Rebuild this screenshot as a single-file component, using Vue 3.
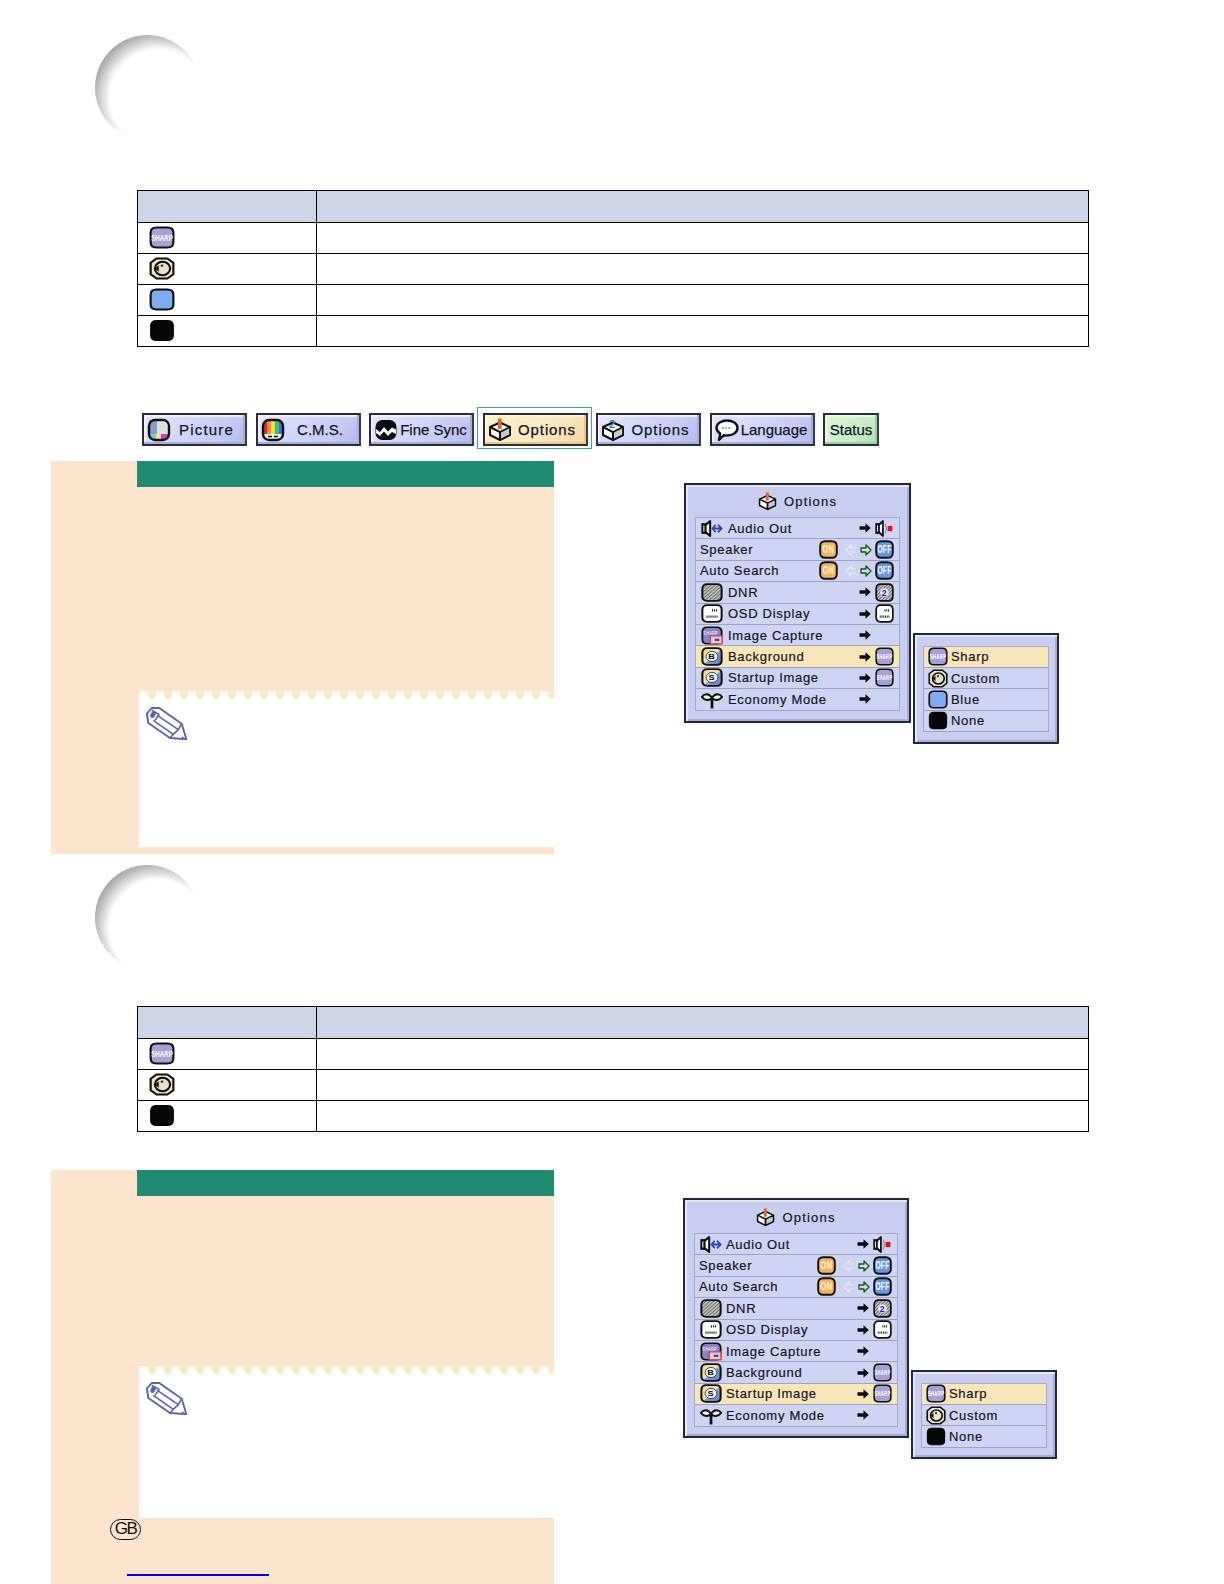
<script setup>
import { h } from 'vue'

const viewBoxes = {
  'i-audio': '0 0 24 18',
  'i-mute': '0 0 24 18',
  'i-eco': '0 0 24 18',
  'i-arrow': '0 0 12 10',
  'i-arrow-green': '0 0 12 12',
  'i-arrow-faded': '0 0 12 12',
  'i-pencil': '0 0 41 33'
}

const captions = {
  'i-sharp': { text: 'SHARP', x: 12, y: 15.5, size: 9.5, fill: '#fff', weight: 700, len: 20 },
  'i-capture': { text: 'SHARP', x: 10.5, y: 11, size: 6.5, fill: '#fff', len: 16 },
  'i-on': { text: 'ON', x: 12, y: 16.5, size: 13, fill: '#fff3d8', weight: 700, len: 15 },
  'i-off': { text: 'OFF', x: 12, y: 16.5, size: 13, fill: '#fff', weight: 700, len: 18 },
  'i-box2': { text: '2', x: 11, y: 9.5, size: 11, fill: '#3f6fd8', weight: 700 },
  'i-dnr2': { text: '2', x: 12, y: 16, size: 11, fill: '#1420d0', weight: 700 },
  'i-b': { text: 'B', x: 12, y: 15.5, size: 10, fill: '#111', weight: 700 },
  'i-s': { text: 'S', x: 12, y: 15.5, size: 10, fill: '#111', weight: 700 }
}

const Icon = (props) => {
  const box = viewBoxes[props.name] || '0 0 24 24'
  const [, , w, ht] = box.split(' ')
  const cap = captions[props.name]
  const kids = [h('use', { href: '#' + props.name, width: w, height: ht })]
  if (cap) {
    const attrs = {
      x: cap.x,
      y: cap.y,
      'text-anchor': 'middle',
      'font-family': 'Liberation Sans',
      'font-size': cap.size,
      'font-weight': cap.weight || 400,
      fill: cap.fill
    }
    if (cap.len) {
      attrs.textLength = cap.len
      attrs.lengthAdjust = 'spacingAndGlyphs'
    }
    kids.push(h('text', attrs, cap.text))
  }
  return h('svg', { viewBox: box, preserveAspectRatio: 'none' }, kids)
}
Icon.props = ['name']

const tabs = [
  { label: 'Picture', icon: 'i-picture', kind: 'loose' },
  { label: 'C.M.S.', icon: 'i-cms', kind: 'tight' },
  { label: 'Fine Sync', icon: 'i-sync', kind: 'tight' },
  { label: 'Options', icon: 'i-box1', kind: 'wide selected' },
  { label: 'Options', icon: 'i-box2', kind: 'wide' },
  { label: 'Language', icon: 'i-bubble', kind: 'tight' },
  { label: 'Status', icon: '', kind: 'tight status' }
]

const baseRows = [
  { label: 'Audio Out', icon: 'i-audio', value: 'i-mute' },
  { label: 'Speaker', toggle: true },
  { label: 'Auto Search', toggle: true },
  { label: 'DNR', icon: 'i-dnr', value: 'i-dnr2' },
  { label: 'OSD Display', icon: 'i-osd', value: 'i-osd' },
  { label: 'Image Capture', icon: 'i-capture' },
  { label: 'Background', icon: 'i-b', value: 'i-sharp' },
  { label: 'Startup Image', icon: 'i-s', value: 'i-sharp' },
  { label: 'Economy Mode', icon: 'i-eco' }
]

const sharp = { label: 'Sharp', icon: 'i-sharp' }
const custom = { label: 'Custom', icon: 'i-custom' }
const blue = { label: 'Blue', icon: 'i-blue' }
const none = { label: 'None', icon: 'i-none' }

const blocks = [
  { id: 'one', options: [sharp, custom, blue, none], active: 'Background', showTabs: true },
  { id: 'two', options: [sharp, custom, none], active: 'Startup Image', showTabs: false }
]

const scallops = Array.from({ length: 26 }, (_, i) => i)
</script>

<template>
  <div class="page">
    <svg class="sprite" width="0" height="0" aria-hidden="true">
      <defs>
        <linearGradient id="g-half" x1="0" y1="0" x2="1" y2="1">
          <stop offset="0" stop-color="#f4d28a" />
          <stop offset="0.5" stop-color="#f2e0b0" />
          <stop offset="0.55" stop-color="#7f9ad8" />
          <stop offset="1" stop-color="#5f7ed0" />
        </linearGradient>
        <pattern id="p-hatch" width="3" height="3" patternUnits="userSpaceOnUse" patternTransform="rotate(45)">
          <rect width="3" height="3" fill="#c8c8c8" />
          <rect width="1.3" height="3" fill="#6e6e6e" />
        </pattern>
      </defs>
      <symbol id="i-sharp" viewBox="0 0 24 24">
        <path d="M7 1.5H17Q22.5 1.5 22.5 7V17Q22.5 22.5 17 22.5H7Q1.5 22.5 1.5 17V7Q1.5 1.5 7 1.5Z" fill="#a79fd8" stroke="#111" stroke-width="2" />
      </symbol>
      <symbol id="i-custom" viewBox="0 0 24 24">
        <path d="M7 1.5H17L22.5 6V18L17 22.5H7L1.5 18V6Z" fill="#e9e5c6" stroke="#111" stroke-width="2" stroke-linejoin="round" />
        <circle cx="12.5" cy="12" r="7" fill="#eadfcb" stroke="#111" stroke-width="2" />
        <path d="M5.5 12L9 8.5V15.5Z" fill="#111" />
        <circle cx="12" cy="9" r="1.3" fill="#333" />
      </symbol>
      <symbol id="i-blue" viewBox="0 0 24 24">
        <path d="M7 1.5H17Q22.5 1.5 22.5 7V17Q22.5 22.5 17 22.5H7Q1.5 22.5 1.5 17V7Q1.5 1.5 7 1.5Z" fill="#7fabef" stroke="#111" stroke-width="2" />
      </symbol>
      <symbol id="i-none" viewBox="0 0 24 24">
        <path d="M7 1H17Q23 1 23 7V17Q23 23 17 23H7Q1 23 1 17V7Q1 1 7 1Z" fill="#070707" />
      </symbol>
      <symbol id="i-picture" viewBox="0 0 24 24">
        <rect x="2" y="2" width="20" height="20" rx="6" fill="#d8d8d8" />
        <rect x="2" y="2" width="8" height="15" fill="#8a9cc8" />
        <rect x="10" y="2" width="12" height="15" fill="#e0e0e0" />
        <rect x="3" y="16" width="6" height="5" fill="#62d8d8" />
        <rect x="9" y="16" width="5" height="5" fill="#f2ee70" />
        <rect x="14" y="16" width="7" height="5" fill="#d838c8" />
        <rect x="2" y="2" width="20" height="20" rx="6" fill="none" stroke="#111" stroke-width="2.4" />
      </symbol>
      <symbol id="i-cms" viewBox="0 0 24 24">
        <rect x="2" y="2" width="20" height="20" rx="6" fill="#eee" />
        <rect x="3" y="3" width="3.6" height="13" fill="#e82828" />
        <rect x="6.6" y="3" width="3.6" height="13" fill="#f09030" />
        <rect x="10.2" y="3" width="3.6" height="13" fill="#e8e840" />
        <rect x="13.8" y="3" width="3.6" height="13" fill="#40c850" />
        <rect x="17.4" y="3" width="3.6" height="13" fill="#4070e8" />
        <path d="M7 18.5H11M13 18.5H17" stroke="#111" stroke-width="1.6" />
        <rect x="2" y="2" width="20" height="20" rx="6" fill="none" stroke="#111" stroke-width="2.4" />
      </symbol>
      <symbol id="i-sync" viewBox="0 0 24 24">
        <rect x="1.5" y="2" width="21" height="20" rx="7" fill="#0b0b0b" />
        <path d="M2 11L6 14L10 9L14 13.5L18 9.5L22 11.5V16L18 14L14 18L10 13.5L6 18L2 15Z" fill="#fff" />
      </symbol>
      <symbol id="i-box1" viewBox="0 0 24 24">
        <path d="M2 9L12 4.5L22 9V17L12 22L2 17Z" fill="#fff" stroke="#111" stroke-width="2" stroke-linejoin="round" />
        <path d="M12 14L22 9V17L12 22Z" fill="#c8c8c8" stroke="#111" stroke-width="1.6" stroke-linejoin="round" />
        <path d="M2 9L12 14V22" fill="none" stroke="#111" stroke-width="2" />
        <rect x="10" y="0.5" width="3.6" height="10.5" fill="#e0682c" />
      </symbol>
      <symbol id="i-box2" viewBox="0 0 24 24">
        <path d="M2 9L12 4.5L22 9V17L12 22L2 17Z" fill="#fff" stroke="#111" stroke-width="2" stroke-linejoin="round" />
        <path d="M12 14L22 9V17L12 22Z" fill="#c8c8c8" stroke="#111" stroke-width="1.6" stroke-linejoin="round" />
        <path d="M2 9L12 14V22" fill="none" stroke="#111" stroke-width="2" />
      </symbol>
      <symbol id="i-bubble" viewBox="0 0 24 24">
        <path d="M12 2.5C18 2.5 22.5 5.7 22.5 10S18 17.5 12 17.5C11 17.5 10 17.4 9 17.2L4 22L5.2 15.6C3 14.2 1.5 12.2 1.5 10C1.5 5.7 6 2.5 12 2.5Z" fill="#fff" stroke="#111" stroke-width="2.4" stroke-linejoin="round" />
        <path d="M7 10H17" stroke="#777" stroke-width="1.6" stroke-dasharray="1.6 1.6" />
      </symbol>
      <symbol id="i-audio" viewBox="0 0 24 18">
        <rect x="1.5" y="5" width="3.6" height="8" fill="#fff" stroke="#111" stroke-width="2.2" />
        <path d="M5 5.5L10 2V16L5 12.5Z" fill="#fff" stroke="#111" stroke-width="2.2" stroke-linejoin="round" />
        <path d="M13 9H22M18.5 5.5L22.5 9L18.5 12.5M16 5.5L12.5 9L16 12.5" fill="none" stroke="#2d42c0" stroke-width="1.8" />
      </symbol>
      <symbol id="i-mute" viewBox="0 0 24 18">
        <rect x="1.5" y="5" width="3.6" height="8" fill="#fff" stroke="#111" stroke-width="2.2" />
        <path d="M5 5.5L10 2V16L5 12.5Z" fill="#fff" stroke="#111" stroke-width="2.2" stroke-linejoin="round" />
        <path d="M13 4.5L14.5 9L13 13.5" fill="none" stroke="#777" stroke-width="1" />
        <rect x="16" y="6.5" width="6" height="5" fill="#e01020" />
      </symbol>
      <symbol id="i-on" viewBox="0 0 24 24">
        <path d="M8 1.5H16Q22.5 1.5 22.5 8V16Q22.5 22.5 16 22.5H8Q1.5 22.5 1.5 16V8Q1.5 1.5 8 1.5Z" fill="#f2b45c" stroke="#111" stroke-width="2.4" />
      </symbol>
      <symbol id="i-off" viewBox="0 0 24 24">
        <path d="M8 1.5H16Q22.5 1.5 22.5 8V16Q22.5 22.5 16 22.5H8Q1.5 22.5 1.5 16V8Q1.5 1.5 8 1.5Z" fill="#6496e6" stroke="#111" stroke-width="2.4" />
      </symbol>
      <symbol id="i-dnr" viewBox="0 0 24 24">
        <path d="M7 1.5H17Q22.5 1.5 22.5 7V17Q22.5 22.5 17 22.5H7Q1.5 22.5 1.5 17V7Q1.5 1.5 7 1.5Z" fill="url(#p-hatch)" stroke="#111" stroke-width="2.2" />
      </symbol>
      <symbol id="i-dnr2" viewBox="0 0 24 24">
        <path d="M7 1.5H17Q22.5 1.5 22.5 7V17Q22.5 22.5 17 22.5H7Q1.5 22.5 1.5 17V7Q1.5 1.5 7 1.5Z" fill="url(#p-hatch)" stroke="#111" stroke-width="2.2" />
        <circle cx="12" cy="12" r="5.5" fill="#e8e8f0" />
      </symbol>
      <symbol id="i-osd" viewBox="0 0 24 24">
        <path d="M7 1.5H17Q22.5 1.5 22.5 7V17Q22.5 22.5 17 22.5H7Q1.5 22.5 1.5 17V7Q1.5 1.5 7 1.5Z" fill="#fff" stroke="#111" stroke-width="2.2" />
        <path d="M12 8H18M6 16H18" stroke="#222" stroke-width="3" stroke-dasharray="1.2 1" />
      </symbol>
      <symbol id="i-capture" viewBox="0 0 24 24">
        <path d="M7 1.5H17Q22.5 1.5 22.5 7V17Q22.5 22.5 17 22.5H7Q1.5 22.5 1.5 17V7Q1.5 1.5 7 1.5Z" fill="#8d84c8" stroke="#111" stroke-width="2" />
        <rect x="10" y="12.5" width="13" height="10" fill="#cdd2f0" stroke="#e03c3c" stroke-width="1.6" />
        <rect x="15" y="16" width="5" height="3" fill="#555" />
      </symbol>
      <symbol id="i-b" viewBox="0 0 24 24">
        <path d="M7 1.5H17Q22.5 1.5 22.5 7V17Q22.5 22.5 17 22.5H7Q1.5 22.5 1.5 17V7Q1.5 1.5 7 1.5Z" fill="url(#g-half)" stroke="#111" stroke-width="2.2" />
        <circle cx="12" cy="12" r="6.4" fill="#eef0f6" stroke="#333" stroke-width="1" />
      </symbol>
      <symbol id="i-s" viewBox="0 0 24 24">
        <path d="M7 1.5H17Q22.5 1.5 22.5 7V17Q22.5 22.5 17 22.5H7Q1.5 22.5 1.5 17V7Q1.5 1.5 7 1.5Z" fill="url(#g-half)" stroke="#111" stroke-width="2.2" />
        <circle cx="12" cy="12" r="6.4" fill="#eef0f6" stroke="#333" stroke-width="1" />
      </symbol>
      <symbol id="i-eco" viewBox="0 0 24 18">
        <path d="M12 8V17.5" stroke="#111" stroke-width="3" />
        <path d="M12 7.5C9 3 4 3 0.9 6.5C4 10 9 10.5 12 7.5Z" fill="#e8f4e0" stroke="#111" stroke-width="2" stroke-linejoin="round" />
        <path d="M12 7.5C15 3 20 3 23.1 6.5C20 10 15 10.5 12 7.5Z" fill="#e8f4e0" stroke="#111" stroke-width="2" stroke-linejoin="round" />
      </symbol>
      <symbol id="i-arrow" viewBox="0 0 12 10">
        <path d="M0.5 3.2H6.5V0.2L11.8 5L6.5 9.8V6.8H0.5Z" fill="#0c0c0c" />
      </symbol>
      <symbol id="i-arrow-green" viewBox="0 0 12 12">
        <path d="M1 4H6V1L11 6L6 11V8H1Z" fill="#c4eec0" stroke="#16502c" stroke-width="1.3" stroke-linejoin="round" />
      </symbol>
      <symbol id="i-arrow-faded" viewBox="0 0 12 12">
        <path d="M11 4H6V1L1 6L6 11V8H11" fill="none" stroke="#e6e8fa" stroke-width="1.2" />
      </symbol>
      <symbol id="i-pencil" viewBox="0 0 41 33">
        <path d="M0.9 6.7L5.7 1H13.3L35.7 16.7L40.4 32.2L24 31L2.3 16Z" fill="#fff" stroke="#5b64ad" stroke-width="1.9" stroke-linejoin="round" />
        <ellipse cx="7" cy="7.7" rx="2.4" ry="3.4" transform="rotate(28 7 7.7)" fill="#5b64ad" />
        <path d="M5.7 3.3L13 7.5L9 13.3M11.3 8.3L32.3 22.7M7.3 13.3L27.3 27.3M35.7 16.7L32.3 22.7L27.3 27.3L24 31" fill="none" stroke="#5b64ad" stroke-width="1.6" stroke-linejoin="round" />
        <path d="M36 29.2L40.4 32.2L35.5 31.8Z" fill="#5b64ad" />
      </symbol>
    </svg>

    <section v-for="block in blocks" :key="block.id" class="block" :class="block.id">
      <div class="crescent"></div>

      <table class="legend">
        <tbody>
          <tr class="legend-head">
            <th class="legend-first"></th>
            <th></th>
          </tr>
          <tr v-for="option in block.options" :key="option.label">
            <td class="legend-first">
              <Icon class="legend-icon" :name="option.icon" />
            </td>
            <td></td>
          </tr>
        </tbody>
      </table>

      <nav v-if="block.showTabs" class="tabs">
        <div v-for="(tab, i) in tabs" :key="i" class="tab" :class="tab.kind">
          <Icon v-if="tab.icon" class="tab-icon" :name="tab.icon" />
          <span class="tab-label">{{ tab.label }}</span>
        </div>
      </nav>

      <div class="steps">
        <div class="panel">
          <div class="panel-head"></div>
          <div class="panel-fill"></div>
          <div class="note">
            <div class="scallops">
              <i v-for="n in scallops" :key="n"></i>
            </div>
            <Icon class="pencil" name="i-pencil" />
          </div>
          <div class="panel-foot">
            <template v-if="block.id === 'two'">
              <span class="region">GB</span>
              <a class="link"></a>
            </template>
          </div>
        </div>

        <div class="figure">
          <div class="osd menu">
            <div class="osd-title">
              <Icon class="title-icon" name="i-box1" />
              <span>Options</span>
            </div>
            <div class="osd-list">
              <div
                v-for="row in baseRows"
                :key="row.label"
                class="osd-row"
                :class="{ active: row.label === block.active, plain: row.toggle }"
              >
                <span v-if="row.icon" class="lead">
                  <Icon class="lead-icon" :name="row.icon" />
                </span>
                <span class="row-label">{{ row.label }}</span>
                <span v-if="row.toggle" class="toggle">
                  <Icon class="value-icon switch-on" name="i-on" />
                  <Icon class="arrow-faded" name="i-arrow-faded" />
                  <Icon class="arrow-green" name="i-arrow-green" />
                  <Icon class="value-icon" name="i-off" />
                </span>
                <span v-else class="tail">
                  <Icon class="arrow" name="i-arrow" />
                  <Icon v-if="row.value" class="value-icon" :name="row.value" />
                  <span v-else class="value-icon"></span>
                </span>
              </div>
            </div>
          </div>

          <div class="osd sub">
            <div class="osd-list">
              <div
                v-for="(option, i) in block.options"
                :key="option.label"
                class="osd-row sub-row"
                :class="{ active: i === 0 }"
              >
                <Icon class="sub-icon" :name="option.icon" />
                <span class="row-label">{{ option.label }}</span>
              </div>
            </div>
          </div>
        </div>
      </div>
    </section>
  </div>
</template>

<style scoped>
.page {
  width: 1224px;
  height: 1584px;
  overflow: hidden;
  background: #fff;
  font-family: "Liberation Sans", Arial, sans-serif;
  color: #15152a;
}
.sprite {
  position: absolute;
}
.crescent {
  width: 105px;
  height: 105px;
  margin-left: 95px;
  border-radius: 50%;
  background: radial-gradient(circle at 63px 63px, #fff 48px, #ededed 52px, #cfcfcf 58px, #b2b2b2 64px, #a8a8a8 67px);
}
.one {
  padding-top: 35px;
}
.two {
  padding-top: 11px;
}
.legend {
  width: 952px;
  margin: 50px 0 0 137px;
  border-collapse: collapse;
  table-layout: fixed;
  border: 1.5px solid #000;
}
.two .legend {
  margin-top: 36px;
}
.legend th,
.legend td {
  padding: 0;
  height: 30px;
  border: 1.5px solid #000;
  vertical-align: middle;
}
.legend-head th {
  height: 31px;
  background: #cdd5e8;
}
.legend-first {
  width: 178px;
}
.legend-icon {
  display: block;
  width: 26px;
  height: 23px;
  margin: -1px 0 1px 11px;
}
.tabs {
  display: flex;
  gap: 8.5px;
  margin: 66px 0 0 142px;
}
.tab {
  display: flex;
  align-items: center;
  box-sizing: border-box;
  width: 105px;
  height: 33px;
  padding-left: 3px;
  border: 2px solid #2c2c34;
  border-right-color: #3a3a50;
  background: linear-gradient(135deg, #e4e6ff, #c8ccf6 70%, #b4b8ea);
  box-shadow: inset -2px -2px 0 #a8acdc, inset 2px 2px 0 #eef0ff;
  font-size: 15px;
  -webkit-text-stroke: 0.25px #15152a;
}
.tab-icon {
  flex: none;
  width: 24px;
  height: 24px;
}
.tab-label {
  flex: 1;
  text-align: center;
  padding-right: 3px;
  white-space: nowrap;
}
.loose .tab-label {
  letter-spacing: 1.2px;
}
.wide .tab-label {
  letter-spacing: 0.9px;
}
.tight .tab-label {
  letter-spacing: 0;
}
.selected {
  position: relative;
  background: linear-gradient(135deg, #fff0c8, #fbe8c0 60%, #f6d69c);
  box-shadow: inset -2px -2px 0 #eac78a, inset 2px 2px 0 #fff6e0;
}
.selected::after {
  content: "";
  position: absolute;
  inset: -8px -6px -5px -8px;
  border: 1px solid #35a6b6;
}
.status {
  width: 56px;
  padding-left: 0;
  background: linear-gradient(135deg, #dcf6d8, #c4ecc4 70%, #a8dcae);
  box-shadow: inset -2px -2px 0 #9ad0a4, inset 2px 2px 0 #e8fae6;
}
.status .tab-label {
  padding-right: 0;
}
.steps {
  display: flex;
  margin: 15px 0 0 51px;
}
.two .steps {
  margin-top: 38px;
}
.panel {
  flex: none;
  width: 503px;
  background: #fde4cd;
}
.panel-head {
  height: 26px;
  margin-left: 86px;
  background: #1f8c72;
}
.panel-fill {
  height: 204px;
}
.two .panel-fill {
  height: 170px;
}
.note {
  height: 156px;
  margin-left: 88px;
  background: #fff;
}
.two .note {
  height: 152px;
}
.scallops {
  display: flex;
  gap: 8px;
  padding-left: 9px;
  overflow: hidden;
}
.scallops i {
  flex: none;
  width: 8px;
  height: 8px;
  border-radius: 1px 1px 50% 50%;
  background: #f8ebc6;
}
.pencil {
  display: block;
  width: 41px;
  height: 33px;
  margin: 8px 0 0 7px;
}
.panel-foot {
  height: 7px;
}
.two .panel-foot {
  height: 66px;
}
.region {
  display: block;
  box-sizing: border-box;
  width: 31px;
  height: 21px;
  margin: 1px 0 0 59px;
  border: 1.8px solid #111;
  border-radius: 11px;
  font-size: 17px;
  line-height: 18px;
  text-align: center;
  letter-spacing: -1.5px;
  color: #111;
}
.link {
  display: block;
  width: 142px;
  height: 2px;
  margin: 34px 0 0 76px;
  background: #0000ee;
}
.figure {
  display: flex;
  align-items: flex-start;
  gap: 2px;
  margin: 22px 0 0 130px;
}
.two .figure {
  margin: 28px 0 0 129px;
}
.osd {
  flex: none;
  box-sizing: border-box;
  border: 2px solid #26263a;
  background: #c9cef0;
  box-shadow: inset 2px 2px 0 #e4e7fb, inset -2px -2px 0 #a8add8;
  font-size: 13px;
  letter-spacing: 0.7px;
  -webkit-text-stroke: 0.2px #15152a;
}
.menu {
  width: 227px;
  height: 240px;
  padding: 0 9px;
}
.two .menu {
  width: 226px;
}
.sub {
  width: 146px;
  padding: 10.5px 8px 9.5px;
  margin-top: 150px;
}
.two .sub {
  margin-top: 172px;
}
.osd-title {
  display: flex;
  align-items: center;
  justify-content: center;
  gap: 7px;
  height: 32px;
  padding-top: 1px;
  box-sizing: border-box;
  font-size: 13px;
  letter-spacing: 1.2px;
}
.two .osd-title {
  height: 33px;
}
.title-icon {
  width: 19px;
  height: 19px;
}
.osd-list {
  border: 1px solid #a4a9cd;
  border-bottom: 0;
  background: #d0d4f3;
}
.osd-row {
  display: flex;
  align-items: center;
  box-sizing: border-box;
  height: 21.4px;
  border-bottom: 1px solid #9ea4c8;
}
.active {
  background: #f8e5b8;
}
.lead {
  flex: none;
  box-sizing: border-box;
  width: 32px;
  padding-left: 5px;
}
.two .lead {
  width: 31px;
}
.lead-icon {
  display: block;
  width: 22px;
  height: 19px;
}
.row-label {
  flex: 1;
  white-space: nowrap;
}
.plain {
  padding-left: 4px;
}
.toggle,
.tail {
  display: flex;
  align-items: center;
  flex: none;
  margin-right: 5px;
}
.toggle {
  gap: 3px;
}
.tail {
  gap: 4px;
}
.value-icon {
  display: block;
  flex: none;
  width: 19px;
  height: 19px;
}
.switch-on {
  margin-right: 4px;
}
.arrow {
  flex: none;
  width: 12px;
  height: 10px;
}
.arrow-green,
.arrow-faded {
  flex: none;
  width: 12px;
  height: 12px;
}
.sub-row {
  padding-left: 4px;
}
.sub-icon {
  flex: none;
  width: 20px;
  height: 19px;
  margin-right: 3px;
}
</style>

<style>
html,
body {
  margin: 0;
  background: #fff;
}
</style>
